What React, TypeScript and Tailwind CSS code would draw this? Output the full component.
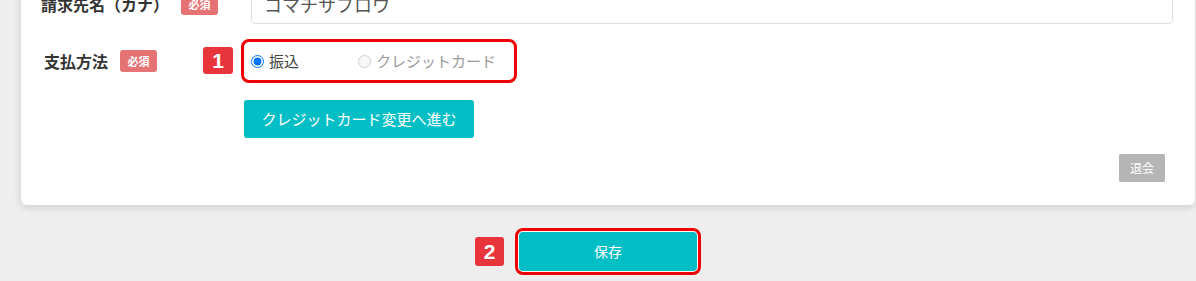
const jp = "font-['Noto_Sans_CJK_JP','Noto_Sans',sans-serif]";

const Required = () => (
  <span className="inline-flex h-[22px] w-[37px] items-center justify-center rounded-[3px] bg-[#e57373] text-[11px] font-bold leading-none text-white">
    必須
  </span>
);

const Marker = ({ num, className }: { num: string; className: string }) => (
  <span
    className={`absolute flex items-center justify-center rounded-[3px] bg-[#e8353b] font-['Liberation_Sans',sans-serif] text-[21px] font-bold leading-none text-white ${className}`}
  >
    {num}
  </span>
);

const App = () => {
  return (
    <div className={`h-[281px] overflow-hidden bg-[#eeeeee] pl-[21px] pr-[1px] ${jp}`}>
      <div className="mt-[-36px] rounded-[6px] bg-white pb-[23px] pr-[22px] pt-[20px] shadow-[0_2px_8px_rgba(0,0,0,0.14)]">
        {/* 請求先名 */}
        <div className="flex h-[40px] items-center">
          <div className="flex w-[230px] shrink-0 items-center gap-[12px] pl-[20px]">
            <span className="text-[16px] font-bold text-[#333]">請求先名（カナ）</span>
            <Required />
          </div>
          <div className="flex h-[40px] flex-1 items-center rounded-[4px] border border-[#dcdcdc] pl-[12px] text-[18px] text-[#555]">
            コマチサブロウ
          </div>
        </div>

        {/* 支払方法 */}
        <div className="mt-[15px] flex h-[44px] items-center">
          <div className="flex w-[220px] shrink-0 items-center gap-[12px] pl-[23px]">
            <span className="text-[16px] font-bold text-[#333]">支払方法</span>
            <Required />
          </div>
          <div className="relative">
            <Marker num="1" className="right-full top-[8px] mr-[8px] h-[27px] w-[30px]" />
            <div className="flex h-[44px] items-center rounded-[8px] border-[3px] border-[#f00000] pl-[7px] pr-[18px]">
              <label className="flex items-center gap-[5px] text-[15px] text-[#444]">
                <input type="radio" name="pay" defaultChecked className="h-[13px] w-[13px] accent-[#0075ff]" />
                振込
              </label>
              <label className="ml-[59px] flex items-center gap-[5px] text-[15px] text-[#9a9a9a]">
                <input type="radio" name="pay" disabled className="h-[13px] w-[13px]" />
                クレジットカード
              </label>
            </div>
          </div>
        </div>

        <div className="mt-[17px] pl-[223px]">
          <button className="h-[38px] w-[230px] rounded-[3px] bg-[#03bec5] text-[15px] text-white">
            クレジットカード変更へ進む
          </button>
        </div>

        <div className="mt-[16px] flex justify-end pr-[8px]">
          <button className="h-[28px] w-[46px] rounded-[2px] bg-[#b5b5b5] text-[12px] text-white">
            退会
          </button>
        </div>
      </div>

      <div className="mt-[23px] flex justify-center">
        <div className="relative">
          <Marker num="2" className="right-full top-[9px] mr-[11px] h-[29px] w-[29px]" />
          <div className="rounded-[8px] border-[3px] border-[#f00000] bg-white p-[1px]">
            <button className="block h-[39px] w-[178px] rounded-[4px] bg-[#03bec5] text-[14px] text-white">
              保存
            </button>
          </div>
        </div>
      </div>
    </div>
  );
};

export default App;
